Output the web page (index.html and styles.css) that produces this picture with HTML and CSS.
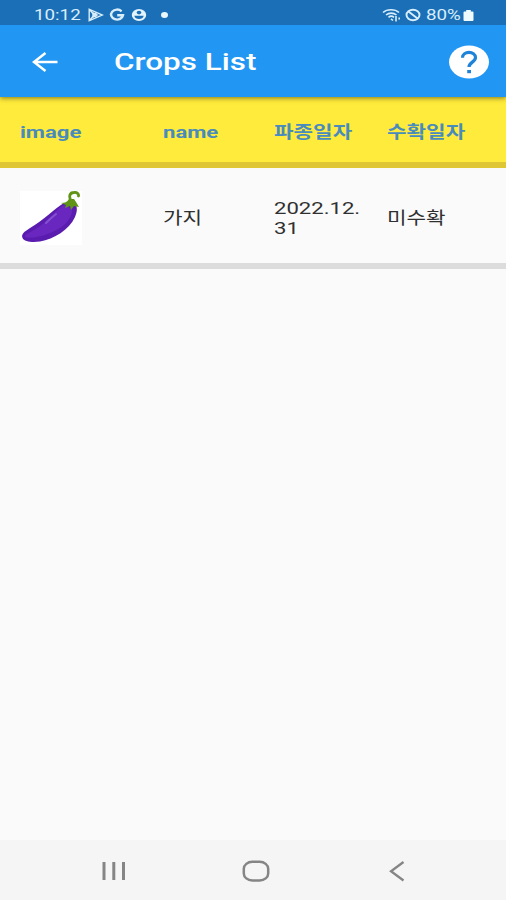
FILE: index.html
```
<!DOCTYPE html>
<html lang="ko">
<head>
  <meta charset="UTF-8">
  <title>Crops List</title>
  <meta name="viewport" content="width=device-width, initial-scale=1.0">
  <link rel="stylesheet" href="styles.css">
</head>
<body>
  <div class="screen">
    <div class="status-bar">
      <div class="status-left">
        <span class="wide clock">10:12</span>
        <svg class="icon-play" width="16" height="14" viewBox="0 0 16 14">
          <path d="M1.2 1.2v11.6L14.500 7zM1.2 1.2L8.500 9.500M1.2 12.800L8.500 4.500" />
          <path d="M5 5v4l4-2z" />
        </svg>
        <svg class="icon-google" width="16" height="14" viewBox="0 0 16 14">
          <path d="M12.6 3.3A6 5 0 1 0 14 7.3H8.2" />
        </svg>
        <svg class="icon-account" width="16" height="14" viewBox="0 0 16 14">
          <ellipse cx="8" cy="7" rx="7.2" ry="6" fill="#e4f4fd" />
          <ellipse cx="8" cy="4.6" rx="2.3" ry="1.8" fill="#1b6fb7" />
          <path d="M3.3 7.8h9.4c-.4 2.2-2.3 3.1-4.7 3.1s-4.3-.9-4.7-3.1z" fill="#1b6fb7" />
        </svg>
        <span class="dot"></span>
      </div>
      <div class="status-right">
        <svg class="icon-wifi" width="21" height="14" viewBox="0 0 21 14">
          <path d="M1 4.500c4-3.600 12-3.600 16 0M4 7c3-2.500 7.500-2.500 10.500 0M6.500 9.300c1.500-1.300 4-1.300 5.500 0" />
          <path d="M9 10.800l2 1.700M14 8v5.500M17.200 9.500v2" />
        </svg>
        <svg class="icon-block" width="16" height="14" viewBox="0 0 16 14">
          <ellipse cx="8" cy="7" rx="6.500" ry="5.200" />
          <path d="M3.500 3.500l9 7" />
        </svg>
        <span class="wide percent">80%</span>
        <svg class="icon-battery" width="11" height="14" viewBox="0 0 11 14">
          <path d="M3.200 2h4.600v1.500h1.700q1 0 1 1v7.500q0 1-1 1h-8q-1 0-1-1v-7.500q0-1 1-1h1.700z" />
        </svg>
      </div>
    </div>

    <div class="app-bar">
      <svg class="icon-back" width="26" height="20" viewBox="0 0 26 20">
        <path d="M13.500 1L2 10l11.500 9M2.500 10H25.500" />
      </svg>
      <h1 class="title"><span class="wide title-text">Crops List</span></h1>
      <svg class="icon-help" width="40" height="34" viewBox="0 0 40 34">
        <ellipse cx="20" cy="17" rx="20" ry="16.500" fill="#fff" />
        <path d="M13.500 12.800C13.500 5.700 26.500 5.700 26.500 12.600C26.500 17 20 17.300 20 22" />
        <rect x="18.200" y="25" width="3.800" height="3.200" fill="#1f83d8" />
      </svg>
    </div>

    <div class="row header-row">
      <div><span class="wide latin">image</span></div>
      <div><span class="wide latin">name</span></div>
      <div><span class="wide">파종일자</span></div>
      <div><span class="wide">수확일자</span></div>
    </div>

    <div class="row crop-row">
      <div>
        <svg class="crop-image" width="62" height="54" viewBox="0 0 62 54">
          <rect width="62" height="54" fill="#fff" />
          <path d="M44 12C35 17 23 30 10 37C4 41 1 43 2.500 47C4 51 13 51.500 20 50.500C34 48 49 39 55 26C57 21 57.500 18 56 14Z" fill="#5a1cae" />
          <path d="M44 14C34 20 27 32 14 39C9 42 5 43 5 46C12 49 38 42 47 31C52 24 55 18 47 15Z" fill="#6927c0" />
          <path d="M36 23Q31 27 26 32" fill="none" stroke="#8550d0" stroke-width="2" stroke-linecap="round" />
          <path d="M49 8C47 11 45 12 41 12L46 14L45 17L50 15L51 19L54 15L59 16L56 11L54 8Z" fill="#5f9417" />
          <path d="M51.500 11C48 5 50 1.500 54 1.500C57 1 59 3 58.500 5" fill="none" stroke="#5f9417" stroke-width="2.800" stroke-linecap="round" />
        </svg>
      </div>
      <div><span class="wide">가지</span></div>
      <div><span class="wide latin">2022.12.<br>31</span></div>
      <div><span class="wide">미수확</span></div>
    </div>

    <div class="content"></div>

    <div class="nav-bar">
      <svg width="26" height="22" viewBox="0 0 26 22">
        <path d="M3 2v18M12.800 2v18M22.500 2v18" stroke-width="3" />
      </svg>
      <svg class="icon-home" width="28" height="22" viewBox="0 0 28 22">
        <rect x="1.800" y="1.800" width="24.400" height="18.600" rx="8.500" ry="7" stroke-width="2.500" />
      </svg>
      <svg width="16" height="22" viewBox="0 0 16 22">
        <path d="M14.500 2L2 11.200L14.500 20.500" stroke-width="2.300" />
      </svg>
    </div>
  </div>
</body>
</html>
```
FILE: styles.css
```
* {
  box-sizing: border-box;
}
body {
  margin: 0;
  background: #fafafa;
  font-family: Roboto, "Noto Sans CJK KR", sans-serif;
}
.screen {
  display: flex;
  flex-direction: column;
  height: 900px;
  overflow: hidden;
}
svg {
  display: block;
  flex: none;
}

/* text is drawn wider than tall */
.wide {
  display: inline-block;
  transform: scaleX(1.25);
  transform-origin: left center;
  white-space: nowrap;
}
.latin {
  transform: scaleX(1.3);
}
.title-text {
  transform: scaleX(1.31);
}

.status-bar {
  position: relative;
  z-index: 1;
  height: 25px;
  padding: 5px 32px 0 34px;
  display: flex;
  justify-content: space-between;
  background: #1b6fb7;
  color: #d8eefa;
  font-size: 15px;
  line-height: 20px;
}
.status-left,
.status-right {
  display: flex;
  align-items: center;
}
.clock {
  width: 54px;
}
.icon-play,
.icon-google,
.icon-wifi,
.icon-block {
  fill: none;
  stroke: #d8eefa;
}
.icon-play {
  stroke-width: 1.4;
}
.icon-google {
  margin-left: 5px;
  stroke-width: 2.4;
}
.icon-account {
  margin-left: 6px;
}
.dot {
  width: 7px;
  height: 6px;
  margin-left: 14px;
  border-radius: 50%;
  background: #e9f7ff;
}
.icon-wifi {
  stroke-width: 1.6;
}
.icon-block {
  margin-left: 2px;
  stroke-width: 1.9;
}
.percent {
  width: 37px;
  margin-left: 5px;
}
.icon-battery {
  fill: #effaff;
}

.app-bar {
  position: relative;
  height: 72px;
  padding: 1px 17px 0 32px;
  display: flex;
  align-items: center;
  background: #2196f3;
  color: #fff;
  box-shadow: 0 1px 5px rgba(0, 0, 0, 0.5);
}
.icon-back {
  fill: none;
  stroke: #fff;
  stroke-width: 2.5;
}
.title {
  flex: 1;
  margin: 1px 0 0 56px;
  font-size: 24px;
  font-weight: 500;
}
.icon-help path {
  fill: none;
  stroke: #1f83d8;
  stroke-width: 3.2;
}

.row {
  display: grid;
  grid-template-columns: 143px 111px 113px 1fr;
  align-items: center;
  padding: 4px 0 0 20px;
  font-size: 17px;
  line-height: 20px;
}
.header-row {
  height: 71px;
  border-bottom: 6px solid #dfc634;
  background: #ffeb3b;
  color: #4a8bbd;
  font-weight: 700;
}
.crop-row {
  height: 101px;
  border-bottom: 6px solid #dcdcdc;
  color: #303030;
}

.content {
  flex: 1;
}

.nav-bar {
  height: 60px;
  padding: 2px 101px 0 101px;
  display: flex;
  align-items: center;
  justify-content: space-between;
  background: #f5f5f5;
}
.nav-bar svg {
  fill: none;
  stroke: #858585;
}
.nav-bar .icon-home {
  margin-right: 5px;
}
```
